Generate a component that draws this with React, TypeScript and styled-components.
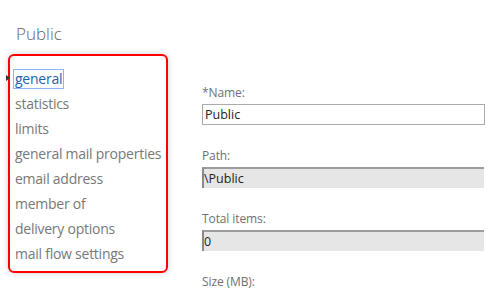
import React from "react";
import styled, { createGlobalStyle } from "styled-components";

const GlobalStyle = createGlobalStyle`
  html, body {
    margin: 0;
    padding: 0;
    background: #ffffff;
  }
  body {
    font-family: "Segoe UI", "Open Sans", "Liberation Sans", sans-serif;
  }
`;

const Page = styled.div`
  width: 495px;
  height: 292px;
  overflow: hidden;
  box-sizing: border-box;
  padding: 22px 0 0 8px;
`;

const Title = styled.h1`
  margin: 0 0 0 8px;
  font-size: 17px;
  line-height: 24px;
  font-weight: 300;
  color: #666666;
`;

const Body = styled.div`
  display: flex;
  align-items: flex-start;
  margin-top: 8px;
`;

const Nav = styled.ul`
  position: relative;
  list-style: none;
  margin: 0;
  width: 160px;
  height: 219px;
  box-sizing: border-box;
  padding: 10px 0 0 5px;
  border: 2px solid #ff0000;
  border-radius: 6px;
  box-shadow: 0 0 6px rgba(0, 0, 0, 0.18);
`;

const NavItem = styled.li<{ $active?: boolean }>`
  position: relative;
  height: 25px;
  line-height: 25px;
  font-size: 14px;
  letter-spacing: -0.25px;
  white-space: nowrap;
  color: ${(p) => (p.$active ? "#1e5fa8" : "#787878")};
`;

const Focus = styled.span`
  display: inline-block;
  line-height: 17px;
  padding: 0 1px 1px 1px;
  margin-left: -2px;
  border: 1px solid #8fb4f0;
`;

const Marker = styled.span`
  position: absolute;
  left: -9px;
  top: 9px;
  width: 0;
  height: 0;
  border-top: 3px solid transparent;
  border-bottom: 3px solid transparent;
  border-left: 4px solid #333333;
`;

const Form = styled.div`
  display: flex;
  flex-direction: column;
  gap: 23px;
  margin: 31px 0 0 34px;
  width: 283px;
`;

const Field = styled.div`
  display: flex;
  flex-direction: column;
`;

const Label = styled.label`
  font-size: 12px;
  line-height: 16px;
  color: #707070;
  margin-bottom: 3px;
  letter-spacing: -0.1px;
`;

const Box = styled.div<{ $readOnly?: boolean }>`
  height: 21px;
  box-sizing: border-box;
  font-size: 12.5px;
  line-height: 19px;
  color: #222222;
  padding-left: 2px;
  background: ${(p) => (p.$readOnly ? "#e6e6e6" : "#ffffff")};
  border: 1px solid #ababab;
  ${(p) =>
    p.$readOnly &&
    `
    border: none;
    border-top: 2px solid #9c9c9c;
    border-left: 2px solid #8a8a8a;
    padding-left: 0;
    width: 282px;
  `}
`;

const items = [
  "general",
  "statistics",
  "limits",
  "general mail properties",
  "email address",
  "member of",
  "delivery options",
  "mail flow settings",
];

const fields = [
  { label: "*Name:", value: "Public", readOnly: false },
  { label: "Path:", value: "\\Public", readOnly: true },
  { label: "Total items:", value: "0", readOnly: true },
];

export default function App() {
  return (
    <Page>
      <GlobalStyle />
      <Title>Public</Title>
      <Body>
        <Nav>
          {items.map((item, i) => (
            <NavItem key={item} $active={i === 0}>
              {i === 0 ? (
                <>
                  <Marker />
                  <Focus>{item}</Focus>
                </>
              ) : (
                item
              )}
            </NavItem>
          ))}
        </Nav>
        <Form>
          {fields.map((f) => (
            <Field key={f.label}>
              <Label>{f.label}</Label>
              <Box $readOnly={f.readOnly}>{f.value}</Box>
            </Field>
          ))}
          <Field>
            <Label>Size (MB):</Label>
          </Field>
        </Form>
      </Body>
    </Page>
  );
}
